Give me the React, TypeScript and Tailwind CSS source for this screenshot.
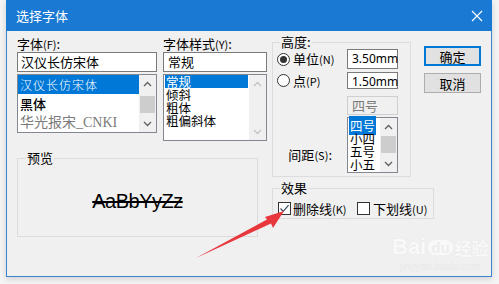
const Chevron = ({ up, color = "#606060" }: { up?: boolean; color?: string }) => (
  <svg width="9" height="6" viewBox="0 0 9 6">
    <path d={up ? "M1 5 L4.5 1.5 L8 5" : "M1 1 L4.5 4.5 L8 1"} fill="none" stroke={color} strokeWidth="1.3" />
  </svg>
);

function ScrollBar({ disabled, thumbTop = 4 }: { disabled?: boolean; thumbTop?: number }) {
  const c = disabled ? "#c4c4c4" : "#606060";
  return (
    <div className="w-[17px] h-full bg-[#f0f0f0] flex flex-col items-center">
      <div className="h-[17px] w-full flex items-center justify-center">
        <Chevron up color={c} />
      </div>
      {!disabled && (
        <div className="w-[15px] h-[17px] bg-[#cdcdcd]" style={{ marginTop: thumbTop }} />
      )}
      <div className="mt-auto h-[17px] w-full flex items-center justify-center">
        <Chevron color={c} />
      </div>
    </div>
  );
}

function Radio({ checked }: { checked?: boolean }) {
  return (
    <div className="w-[13px] h-[13px] rounded-full border border-[#333] bg-white flex items-center justify-center">
      {checked && <div className="w-[7px] h-[7px] rounded-full bg-[#333]" />}
    </div>
  );
}

function Check({ checked }: { checked?: boolean }) {
  return (
    <div className="w-[13px] h-[13px] border border-[#333] bg-white flex items-center justify-center">
      {checked && (
        <svg width="11" height="11" viewBox="0 0 11 11">
          <path d="M1.5 5.5 L4.2 8.3 L9.6 2.2" fill="none" stroke="#3a4a5a" strokeWidth="1.2" />
        </svg>
      )}
    </div>
  );
}

const Key = ({ k }: { k: string }) => <span className="text-[11px]">({k})</span>;

export default function App() {
  return (
    <div className="relative w-[499px] h-[284px] overflow-hidden bg-[#f4f4f4] pl-[6px] text-[13px] text-black font-['Microsoft_YaHei','Noto_Sans_CJK_SC',sans-serif]">
      <div className="w-[486px] h-[277px] flex flex-col border-x border-b border-[#3a84d0] shadow-[0_2px_6px_rgba(0,0,0,0.15)]">
        {/* title bar */}
        <div className="h-[31px] -mx-px bg-[#1a79d2] flex items-center justify-between pl-[10px] pr-[9px] text-white">
          <span className="leading-none">选择字体</span>
          <svg width="12" height="12" viewBox="0 0 12 12">
            <path d="M1 1 L11 11 M11 1 L1 11" stroke="#fff" strokeWidth="1.2" />
          </svg>
        </div>

        {/* body */}
        <div className="flex-1 bg-[#f0f0f0] flex pl-[10px]">
          <div className="w-[250px] flex flex-col pt-[4px]">
            <div className="flex gap-[6px]">
              <div className="w-[140px] flex flex-col">
                <div className="h-[17px] leading-[17px]">
                  字体<Key k="F" />:
                </div>
                <div className="h-[20px] border border-[#7a7a7a] bg-white pl-[3px] leading-[18px]">汉仪长仿宋体</div>
                <div className="mt-[2px] h-[59px] border border-[#828790] bg-white flex">
                  <div className="flex-1 flex flex-col">
                    <div className="h-[19px] bg-[#0078d7] text-white pl-[2px] leading-[19px] text-[12px] font-light tracking-[1px]">
                      汉仪长仿宋体
                    </div>
                    <div className="h-[19px] pl-[2px] leading-[19px] font-medium">黑体</div>
                    <div className="h-[19px] pl-[2px] leading-[19px] text-[#7a7a7a] text-[14px] font-['Liberation_Serif','Noto_Sans_CJK_SC',serif]">
                      华光报宋_CNKI
                    </div>
                  </div>
                  <ScrollBar thumbTop={4} />
                </div>
              </div>

              <div className="w-[104px] flex flex-col">
                <div className="h-[17px] leading-[17px]">
                  字体样式<Key k="Y" />:
                </div>
                <div className="h-[20px] border border-[#7a7a7a] bg-white pl-[4px] leading-[18px]">常规</div>
                <div className="mt-[2px] h-[67px] border border-[#828790] bg-white flex">
                  <div className="flex-1 flex flex-col leading-[13px] text-[12.5px]">
                    <div className="h-[13px] mx-[1px] bg-[#0078d7] text-white pl-[1px]">常规</div>
                    <div className="h-[13px] pl-[2px]">倾斜</div>
                    <div className="h-[13px] pl-[2px]">粗体</div>
                    <div className="h-[13px] pl-[2px]">粗偏斜体</div>
                  </div>
                  <ScrollBar disabled />
                </div>
              </div>
            </div>

            <fieldset className="mt-[9px] w-[241px] h-[87px] border border-[#dcdcdc]">
              <legend className="ml-[8px] px-[1px] leading-[16px]">预览</legend>
              <div className="h-[70px] flex items-center justify-center">
                <span className="text-[20px] tracking-[-0.5px] font-['Liberation_Sans',sans-serif] line-through decoration-[1.5px] decoration-black leading-none">
                  AaBbYyZz
                </span>
              </div>
            </fieldset>
          </div>

          <div className="ml-[5px] pt-[3px] flex flex-col">
            <div className="flex">
              <fieldset className="w-[139px] h-[143px] border border-[#dcdcdc] pl-[4px]">
                <legend className="ml-[3px] px-[1px] leading-[16px]">高度:</legend>
                <div className="-mt-[1px] grid grid-cols-[70px_51px] grid-rows-[20px_20px_19px_56px]">
                  <div className="flex items-center gap-[3px]">
                    <Radio checked />
                    <span>
                      单位<Key k="N" />
                    </span>
                  </div>
                  <div className="border border-[#7a7a7a] bg-white pl-[4px] leading-[18px] text-[12px] font-['Noto_Sans',sans-serif]">
                    3.50mm
                  </div>

                  <div className="mt-[3px] flex items-center gap-[3px]">
                    <Radio />
                    <span>
                      点<Key k="P" />
                    </span>
                  </div>
                  <div className="mt-[3px] border border-[#7a7a7a] bg-white pl-[4px] leading-[18px] text-[12px] font-['Noto_Sans',sans-serif]">
                    1.50mm
                  </div>

                  <div className="mt-[7px]" />
                  <div className="mt-[7px] h-[19px] border border-[#cfcfcf] bg-[#f0f0f0] pl-[4px] leading-[17px] text-[#7a7a7a]">
                    四号
                  </div>

                  <div className="mt-[9px] flex items-end justify-end pr-[15px] pb-[1px]">
                    <span className="leading-[16px]">
                      间距<Key k="S" />:
                    </span>
                  </div>
                  <div className="mt-[9px] h-[56px] border border-[#828790] bg-white flex">
                    <div className="flex-1 flex flex-col leading-[13px] text-[12.5px] pt-[1px]">
                      <div className="h-[13px] pl-[1px]">
                        <span className="bg-[#0078d7] text-white px-[1px]">四号</span>
                      </div>
                      <div className="h-[13px] pl-[2px]">小四</div>
                      <div className="h-[13px] pl-[2px]">五号</div>
                      <div className="h-[13px] pl-[2px]">小五</div>
                    </div>
                    <ScrollBar thumbTop={1} />
                  </div>
                </div>
              </fieldset>

              <div className="ml-[13px] mt-[12px] flex flex-col gap-[7px]">
                <div className="w-[57px] h-[20px] border-2 border-[#0078d7] bg-[#e1e1e1] flex items-center justify-center leading-none">
                  确定
                </div>
                <div className="w-[57px] h-[20px] border border-[#adadad] bg-[#e1e1e1] flex items-center justify-center leading-none">
                  取消
                </div>
              </div>
            </div>

            <fieldset className="mt-[3px] w-[162px] h-[39px] border border-[#dcdcdc]">
              <legend className="ml-[7px] px-[1px] leading-[16px]">效果</legend>
              <div className="pt-[3px] pl-[5px] flex items-center">
                <div className="w-[79px] flex items-center gap-[2px]">
                  <Check checked />
                  <span>
                    删除线<Key k="K" />
                  </span>
                </div>
                <div className="flex items-center gap-[3px]">
                  <Check />
                  <span>
                    下划线<Key k="U" />
                  </span>
                </div>
              </div>
            </fieldset>
          </div>
        </div>
      </div>

      {/* watermark */}
      <div className="absolute left-[392px] top-[236px] flex flex-col items-center pointer-events-none opacity-60">
        <div className="flex items-center text-[22px] font-bold text-white leading-none font-['Liberation_Sans',sans-serif] [text-shadow:0_0_1px_#d8d8d8]">
          <span>Bai</span>
          <span className="mx-[2px] rounded-full bg-white text-[#ececec] text-[15px] px-[3px] [text-shadow:none]">du</span>
          <span className="text-[17px] font-['Noto_Sans_CJK_SC',sans-serif]">经验</span>
        </div>
        <div className="mt-[4px] text-[10px] text-[#e6e6e6] leading-none font-['Liberation_Sans',sans-serif]">jingyan.baidu.com</div>
      </div>

      {/* red arrow */}
      <svg className="absolute left-0 top-0 pointer-events-none" width="499" height="284" viewBox="0 0 499 284">
        <polygon points="196,258 267,219.5 265,217 284,211 273,228 271,223.5" fill="#e8383d" />
      </svg>
    </div>
  );
}
